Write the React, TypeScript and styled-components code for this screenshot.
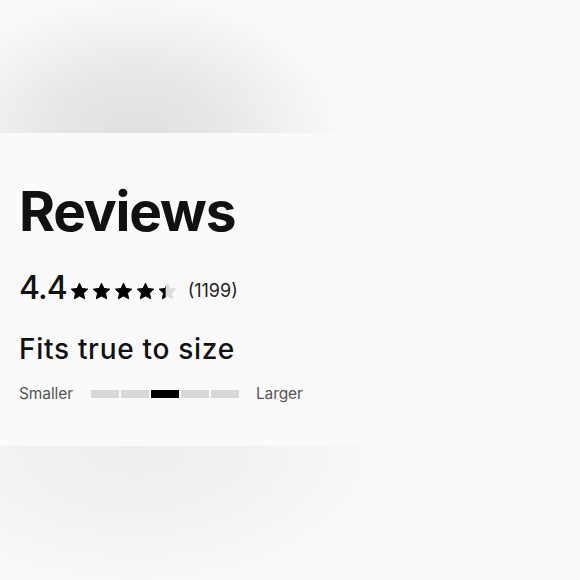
import React from "react";
import styled, { createGlobalStyle } from "styled-components";

const Global = createGlobalStyle`
  html, body { margin: 0; padding: 0; background: #fafafa; }
  body { font-family: Inter, "Noto Sans", sans-serif; color: #111; }
`;

const Page = styled.div`
  width: 580px;
  height: 580px;
  display: flex;
  flex-direction: column;
  background: #fafafa;
  overflow: hidden;
`;

const TopMedia = styled.div`
  height: 133px;
  flex: none;
  background: radial-gradient(ellipse 210px 140px at 135px 133px, #e0e0e0 0%, #e7e7e7 40%, #f2f2f2 75%, #fafafa 100%);
`;

const Panel = styled.section`
  height: 313px;
  flex: none;
  box-sizing: border-box;
  padding: 47px 19px 0;
  display: flex;
  flex-direction: column;
  background: #fafafa;
`;

const Title = styled.h2`
  margin: 0;
  font-size: 55px;
  line-height: 62px;
  font-weight: 700;
  letter-spacing: -1.2px;
  color: #111;
`;

const RatingRow = styled.div`
  margin-top: 28px;
  display: flex;
  align-items: center;
  height: 36px;
`;

const Score = styled.span`
  font-size: 32px;
  font-weight: 500;
  letter-spacing: -1px;
  line-height: 36px;
  color: #111;
`;

const Stars = styled.div`
  display: flex;
  gap: 3px;
  margin-left: 3px;
  margin-top: 6px;
`;

const Count = styled.span`
  margin-left: 11px;
  margin-top: 5px;
  font-size: 18px;
  color: #222;
  letter-spacing: 0;
`;

const FitTitle = styled.h3`
  margin: 27px 0 0;
  font-size: 28px;
  line-height: 32px;
  font-weight: 500;
  color: #111;
  letter-spacing: 0.7px;
`;

const ScaleRow = styled.div`
  margin-top: 17px;
  display: flex;
  align-items: center;
  height: 22px;
`;

const ScaleLabel = styled.span`
  font-size: 15.5px;
  color: #555;
  letter-spacing: -0.1px;
`;

const Bars = styled.div`
  display: flex;
  gap: 2px;
  margin: 2px 17px 0 18px;
`;

const Bar = styled.div<{ $active?: boolean }>`
  width: 28px;
  height: 8px;
  background: ${(p) => (p.$active ? "#000" : "#d8d8d8")};
`;

const BottomMedia = styled.div`
  flex: 1;
  background: radial-gradient(ellipse 260px 150px at 135px 0px, #eeeeee 0%, #f1f1f1 40%, #f6f6f6 75%, #fafafa 100%);
`;

const STAR = "M12 1.5l3.1 6.7 7.3.8-5.4 5 1.5 7.2L12 17.6l-6.5 3.6 1.5-7.2-5.4-5 7.3-.8z";

function Star({ fill, id }: { fill: number; id: string }) {
  return (
    <svg width="19" height="19" viewBox="0 0 24 24">
      <defs>
        <clipPath id={id}>
          <rect x="0" y="0" width={24 * fill} height="24" />
        </clipPath>
      </defs>
      <path d={STAR} fill="#dcdcdc" stroke="#dcdcdc" strokeWidth="1.2" strokeLinejoin="round" />
      <path d={STAR} fill="#000" clipPath={`url(#${id})`} stroke="#000" strokeWidth="1.2" strokeLinejoin="round" />
    </svg>
  );
}

export default function App() {
  const rating = 4.4;
  return (
    <>
      <Global />
      <Page>
        <TopMedia />
        <Panel>
          <Title>Reviews</Title>
          <RatingRow>
            <Score>{rating}</Score>
            <Stars>
              {[0, 1, 2, 3, 4].map((i) => (
                <Star key={i} id={`s${i}`} fill={Math.max(0, Math.min(1, rating - i))} />
              ))}
            </Stars>
            <Count>(1199)</Count>
          </RatingRow>
          <FitTitle>Fits true to size</FitTitle>
          <ScaleRow>
            <ScaleLabel>Smaller</ScaleLabel>
            <Bars>
              {[0, 1, 2, 3, 4].map((i) => (
                <Bar key={i} $active={i === 2} />
              ))}
            </Bars>
            <ScaleLabel>Larger</ScaleLabel>
          </ScaleRow>
        </Panel>
        <BottomMedia />
      </Page>
    </>
  );
}
